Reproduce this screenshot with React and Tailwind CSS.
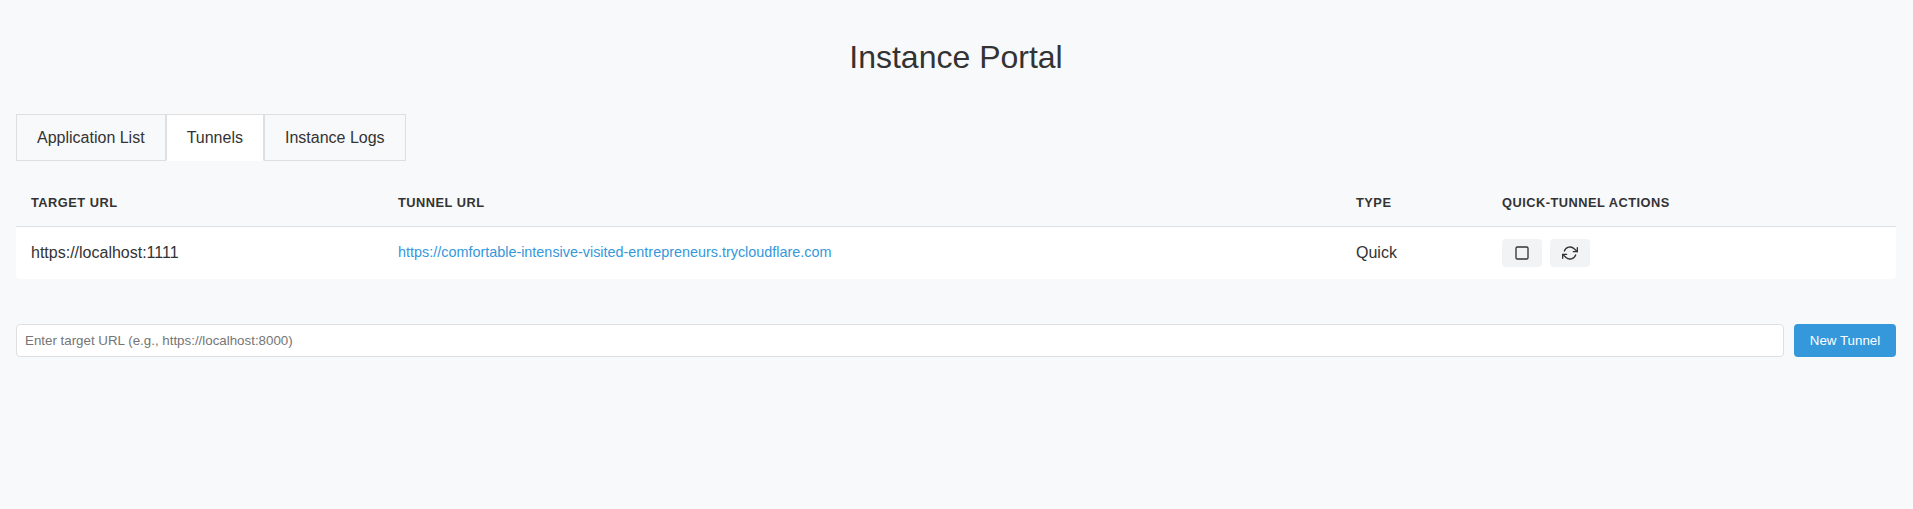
import { FiRefreshCw, FiSquare } from "react-icons/fi";

const tabs = ["Application List", "Tunnels", "Instance Logs"];

function Th({ children, className }) {
  return (
    <div className={"pt-px text-[12.8px] leading-[21px] font-bold uppercase tracking-[0.5px] " + className}>{children}</div>
  );
}

function ActionButton({ children }) {
  return (
    <button className="flex h-7 w-10 items-center justify-center rounded bg-[#f1f3f5] text-[#333]">
      {children}
    </button>
  );
}

export default function App() {
  return (
    <div className="min-h-screen bg-[#f8f9fb] pt-8 pr-[17px] pl-4 font-['Liberation_Sans',Arial,sans-serif] text-base text-[#333]">
      <h1 className="h-[51px] text-center text-[32px] leading-[51px]">Instance Portal</h1>
      <nav className="mt-[31px] flex">
        {tabs.map((t) => (
          <button
            key={t}
            className={
              "h-[47px] border border-[#dfdfdf] px-5 " +
              (t === "Tunnels" ? "border-b-white bg-white" : "bg-[#f8f9fb]")
            }
          >
            {t}
          </button>
        ))}
      </nav>
      <div className="mt-[16px]">
        <div className="flex h-[50px] items-center border-b border-[#dddfe1]">
          <Th className="w-[382px] pl-[15px]">Target URL</Th>
          <Th className="w-[958px]">Tunnel URL</Th>
          <Th className="w-[146px]">Type</Th>
          <Th className="">Quick-Tunnel Actions</Th>
        </div>
        <div className="flex h-[52px] items-center rounded-b bg-white">
          <div className="w-[382px] pl-[15px]">https://localhost:1111</div>
          <a className="w-[958px] text-[14.4px] text-[#3498db]">
            https://comfortable-intensive-visited-entrepreneurs.trycloudflare.com
          </a>
          <div className="w-[146px]">Quick</div>
          <div className="flex gap-2">
            <ActionButton><FiSquare size={16} /></ActionButton>
            <ActionButton><FiRefreshCw size={16} /></ActionButton>
          </div>
        </div>
      </div>
      <form className="mt-[45px] flex gap-[10px]">
        <input
          placeholder="Enter target URL (e.g., https://localhost:8000)"
          className="h-[33px] flex-1 rounded border border-[#dfdfdf] bg-white px-2 text-[13.333px] placeholder:text-[#757575]"
        />
        <button type="button" className="h-[33px] w-[102px] rounded bg-[#3498db] text-[13.333px] text-white">
          New Tunnel
        </button>
      </form>
    </div>
  );
}
